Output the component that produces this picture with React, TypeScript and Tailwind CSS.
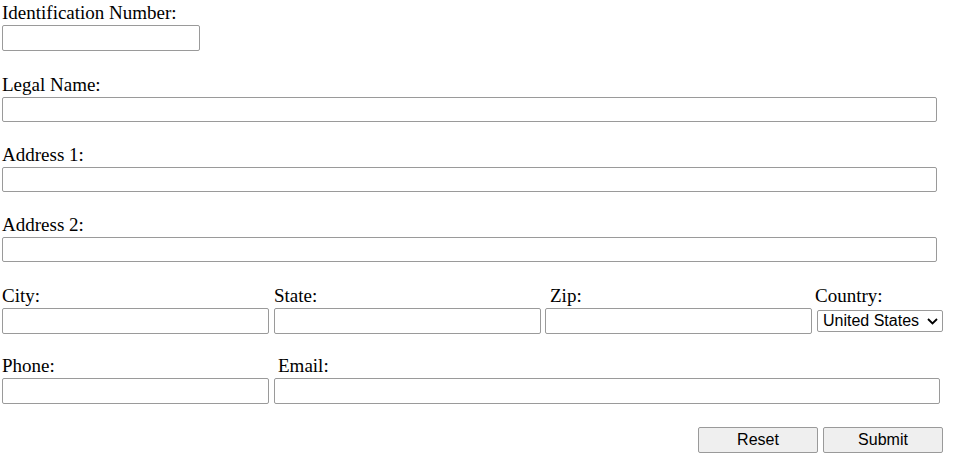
import React, { useState } from 'react'

const inputCls =
  'block h-[25px] border border-[#9a9a9a] rounded-[2px] bg-white px-1 text-[13px] outline-none'
const labelCls = 'block h-[20px] leading-[20px] text-[19px] text-black whitespace-nowrap'

const Field: React.FC<{ label: string; width: string; labelOffset?: string; className?: string }> = ({
  label,
  width,
  labelOffset = '',
  className = '',
}) => (
  <div className={className}>
    <label className={`${labelCls} ${labelOffset}`}>{label}</label>
    <input type="text" className={`${inputCls} mt-[2px] ${width}`} />
  </div>
)

const App: React.FC = () => {
  const [country, setCountry] = useState('United States')

  return (
    <form
      className="w-[960px] h-[468px] bg-white pl-[2px] pt-[3px]"
      style={{ fontFamily: '"Liberation Serif", "Times New Roman", serif' }}
      onSubmit={(e) => e.preventDefault()}
    >
      <Field label="Identification Number:" width="w-[198px] h-[26px]" className="mb-[24px]" />
      <Field label="Legal Name:" width="w-[935px]" className="mb-[23px]" />
      <Field label="Address 1:" width="w-[935px]" className="mb-[23px]" />
      <Field label="Address 2:" width="w-[935px]" className="mb-[24px]" />

      {/* city / state / zip / country */}
      <div className="flex mb-[22px]">
        <Field label="City:" width="w-[267px] h-[26px]" className="w-[272px]" />
        <Field label="State:" width="w-[267px] h-[26px]" className="w-[271px]" />
        <Field label="Zip:" width="w-[267px] h-[26px]" labelOffset="pl-[5px]" className="w-[272px]" />
        <div className="w-[126px]">
          <label className={`${labelCls} -ml-[2px]`}>Country:</label>
          <div className="relative mt-[4px] w-[126px]">
            <select
              value={country}
              onChange={(e) => setCountry(e.target.value)}
              className="block appearance-none h-[22px] w-[126px] border border-[#9a9a9a] rounded-[2px] bg-white pl-[5px] text-[16px] leading-[20px] text-black outline-none"
              style={{ fontFamily: '"Liberation Sans", Arial, sans-serif' }}
            >
              <option>United States</option>
              <option>Canada</option>
              <option>Mexico</option>
            </select>
            <svg
              className="pointer-events-none absolute right-[5px] top-[8px]"
              width="11"
              height="7"
              viewBox="0 0 11 7"
              fill="none"
            >
              <path d="M1 1l4.5 4.5L10 1" stroke="#000" strokeWidth="1.8" />
            </svg>
          </div>
        </div>
      </div>

      {/* phone / email */}
      <div className="flex mb-[23px]">
        <Field label="Phone:" width="w-[267px] h-[26px]" className="w-[272px]" />
        <Field label="Email:" width="w-[666px] h-[26px]" labelOffset="pl-[4px]" />
      </div>

      <div className="flex justify-end gap-[5px] pr-[17px]">
        <button
          type="reset"
          className="h-[26px] w-[120px] border border-[#9a9a9a] rounded-[2px] bg-[#efefef] text-[16px] text-black"
          style={{ fontFamily: '"Liberation Sans", Arial, sans-serif' }}
        >
          Reset
        </button>
        <button
          type="submit"
          className="h-[26px] w-[120px] border border-[#9a9a9a] rounded-[2px] bg-[#efefef] text-[16px] text-black"
          style={{ fontFamily: '"Liberation Sans", Arial, sans-serif' }}
        >
          Submit
        </button>
      </div>
    </form>
  )
}

export default App
